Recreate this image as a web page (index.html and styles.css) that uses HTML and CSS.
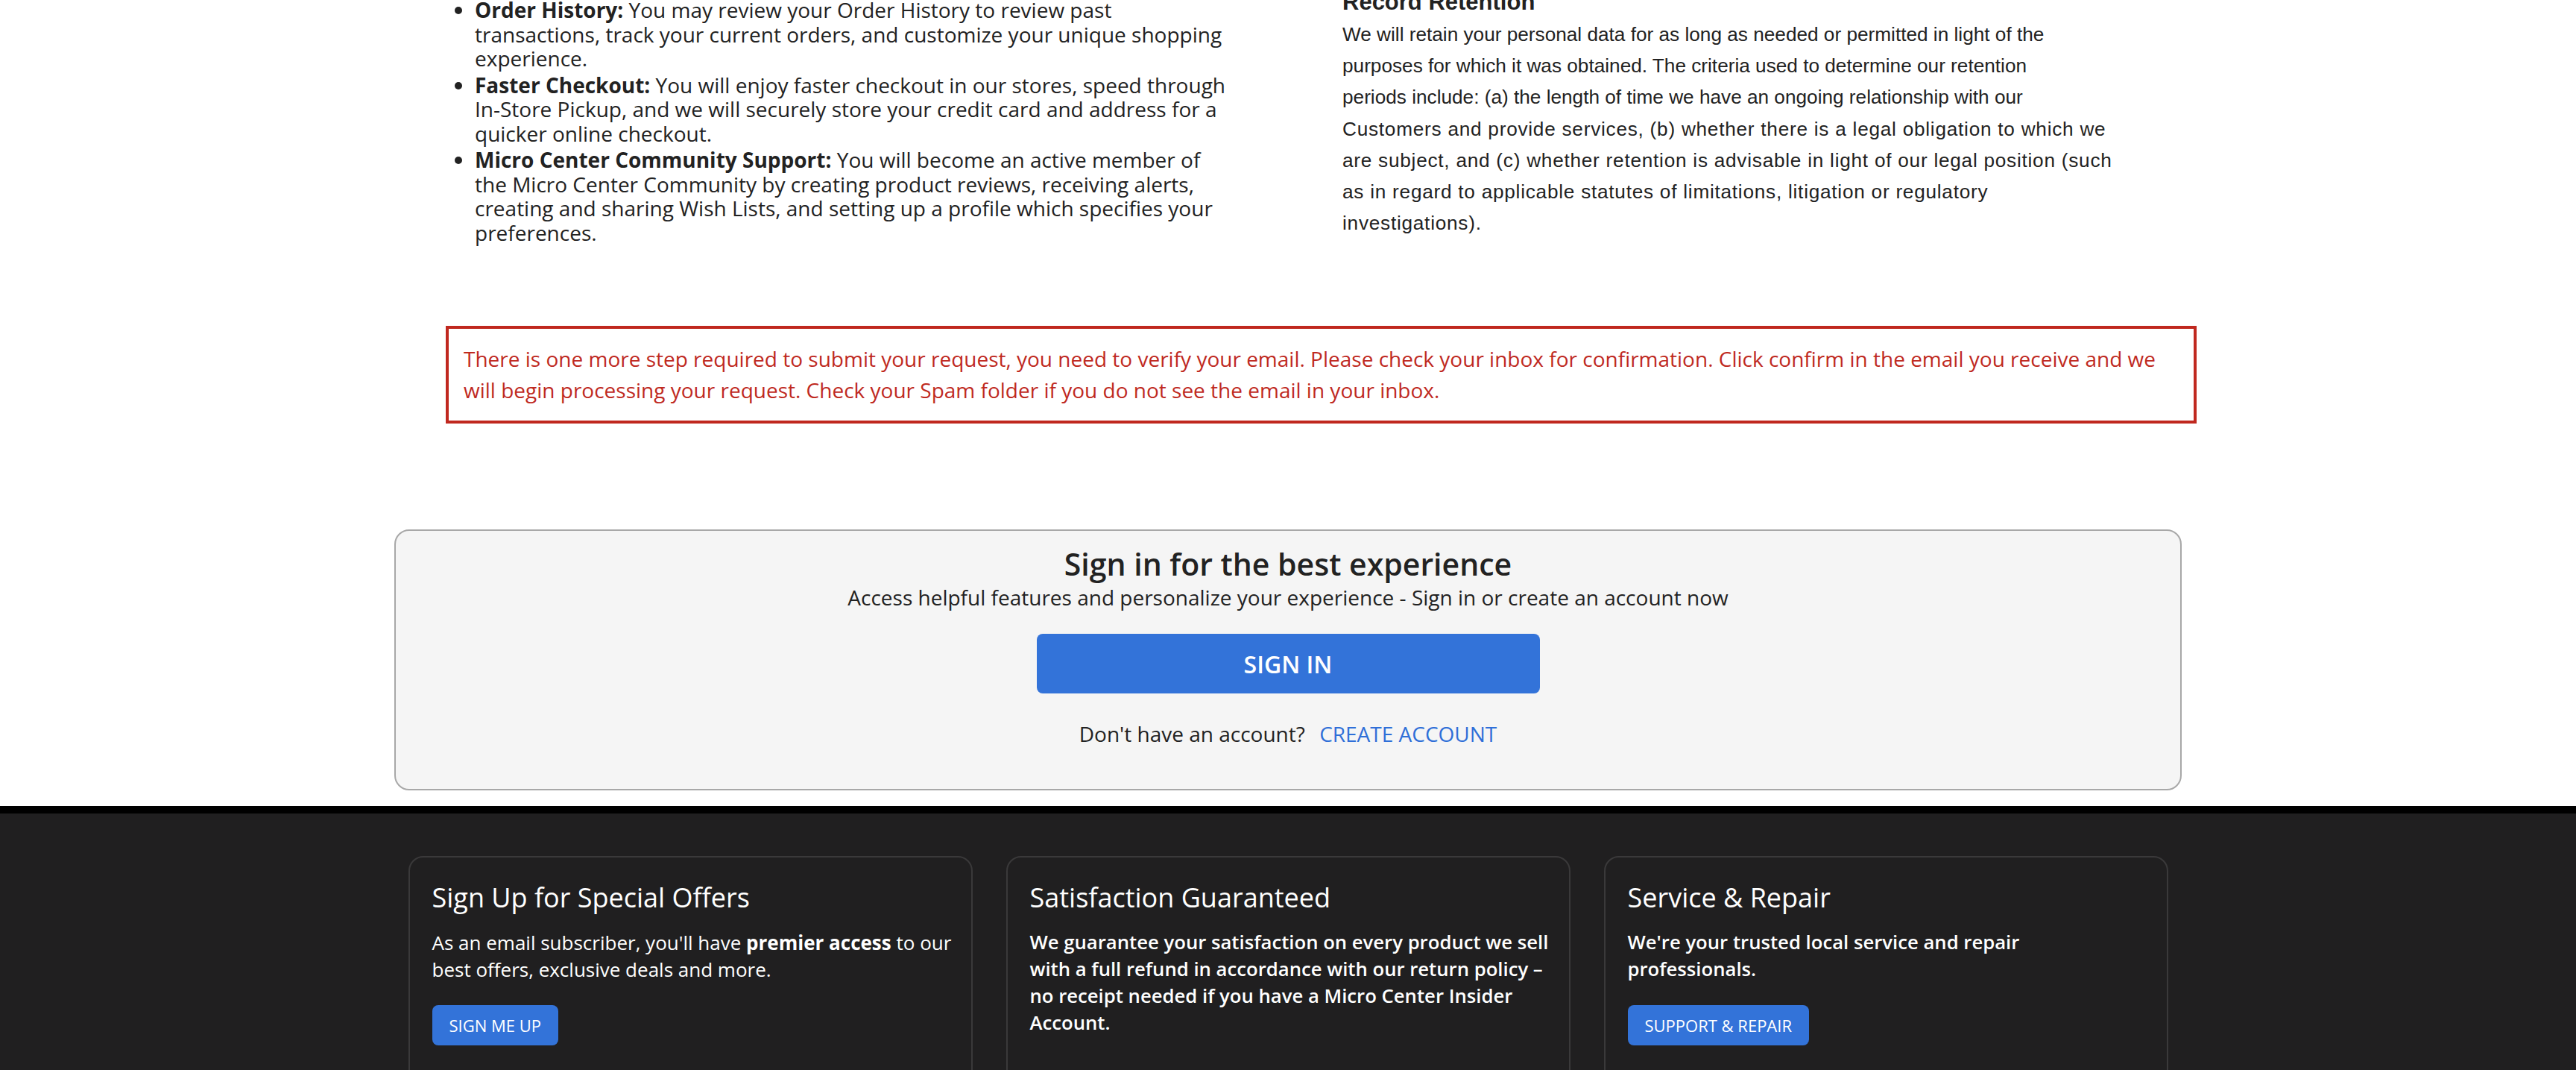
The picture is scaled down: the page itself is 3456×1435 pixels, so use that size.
FILE: index.html
```html
<!DOCTYPE html>
<html lang="en">
<head>
<meta charset="utf-8">
<title>Micro Center - Privacy Request</title>
<link rel="stylesheet" href="styles.css">
</head>
<body>
<main class="content">
  <div class="columns">
    <div class="col-left">
      <ul class="benefits">
        <li><strong>Order History:</strong> You may review your Order History to review past transactions, track your current orders, and customize your unique shopping experience.</li>
        <li><strong>Faster Checkout:</strong> You will enjoy faster checkout in our stores, speed through In-Store Pickup, and we will securely store your credit card and address for a quicker online checkout.</li>
        <li><strong>Micro Center Community Support:</strong> You will become an active member of the Micro Center Community by creating product reviews, receiving alerts, creating and sharing Wish Lists, and setting up a profile which specifies your preferences.</li>
      </ul>
    </div>
    <div class="col-right">
      <h3 class="policy-heading">Record Retention</h3>
      <p class="policy-text">We will retain your personal data for as long as needed or permitted in light of the<br>purposes for which it was obtained. The criteria used to determine our retention<br>periods include: (a) the length of time we have an ongoing relationship with our<br><span class="policy-tail">Customers and provide services, (b) whether there is a legal obligation to which we<br>are subject, and (c) whether retention is advisable in light of our legal position (such<br>as in regard to applicable statutes of limitations, litigation or regulatory<br>investigations).</span></p>
    </div>
  </div>
  <div class="notice">There is one more step required to submit your request, you need to verify your email. Please check your inbox for confirmation. Click confirm in the email you receive and we will begin processing your request. Check your Spam folder if you do not see the email in your inbox.</div>
</main>

<section class="signin-box">
  <h2 class="signin-title">Sign in for the best experience</h2>
  <p class="signin-sub">Access helpful features and personalize your experience - Sign in or create an account now</p>
  <a class="signin-btn" href="#">SIGN IN</a>
  <p class="signin-create">Don't have an account? <a class="create-link" href="#">CREATE ACCOUNT</a></p>
</section>

<footer class="footer">
  <div class="footer-cards">
    <div class="card">
      <h3 class="card-title">Sign Up for Special Offers</h3>
      <p class="card-text">As an email subscriber, you'll have <strong>premier access</strong> to our best offers, exclusive deals and more.</p>
      <a class="card-btn" href="#">SIGN ME UP</a>
    </div>
    <div class="card">
      <h3 class="card-title">Satisfaction Guaranteed</h3>
      <p class="card-text card-text-strong">We guarantee your satisfaction on every product we sell with a full refund in accordance with our return policy – no receipt needed if you have a Micro Center Insider Account.</p>
    </div>
    <div class="card">
      <h3 class="card-title">Service &amp; Repair</h3>
      <p class="card-text card-text-strong">We're your trusted local service and repair professionals.</p>
      <a class="card-btn" href="#">SUPPORT &amp; REPAIR</a>
    </div>
  </div>
</footer>
</body>
</html>
```

FILE: styles.css
```css
html, body {
  margin: 0;
  padding: 0;
  background: #ffffff;
}

body {
  font-family: "Open Sans", "Liberation Sans", sans-serif;
  color: #222222;
  overflow: hidden;
}

.content {
  width: 2349px;
  margin: -3px 0 0 calc(50% - 1130px);
}

.columns {
  display: grid;
  grid-template-columns: 1203px 1146px;
  align-items: start;
}

.benefits {
  margin: 0;
  padding: 0 0 0 39px;
  width: 1015px;
  font-size: 28px;
  line-height: 32.5px;
  color: #222;
}

.benefits li {
  margin: 0 0 3px 0;
}

.benefits strong {
  font-weight: 700;
}

.col-right {
  margin-top: -12px;
  font-family: "Liberation Sans", Arial, sans-serif;
  color: #222;
}

.policy-heading {
  margin: 0 0 4px 0;
  font-size: 31px;
  line-height: 36px;
  font-weight: 700;
}

.policy-text {
  margin: 0;
  width: 1100px;
  font-size: 26.2px;
  line-height: 42.2px;
}

.policy-tail {
  letter-spacing: 0.75px;
}

.notice {
  margin-top: 106px;
  border: 4px solid #c0281f;
  padding: 19px 20px 20px 20px;
  color: #bf2a1f;
  font-size: 28px;
  line-height: 42px;
}

.signin-box {
  width: 2398px;
  box-sizing: border-box;
  margin: 142px auto 0 auto;
  background: #f5f5f5;
  border: 2px solid #a8a8a8;
  border-radius: 20px;
  padding: 20px 0 53px 0;
  display: flex;
  flex-direction: column;
  align-items: center;
  text-align: center;
}

.signin-title {
  margin: 0;
  font-size: 41px;
  line-height: 48px;
  font-weight: 600;
  color: #222;
}

.signin-sub {
  margin: 0;
  font-size: 28px;
  line-height: 42px;
  color: #222;
}

.signin-btn {
  margin-top: 28px;
  width: 675px;
  height: 80px;
  display: flex;
  align-items: center;
  justify-content: center;
  background: #3373d9;
  border-radius: 8px;
  color: #ffffff;
  text-decoration: none;
  font-size: 32px;
  font-weight: 600;
}

.signin-create {
  margin: 33px 0 0 0;
  font-size: 28px;
  line-height: 42px;
  color: #222;
}

.create-link {
  margin-left: 12px;
  color: #2f6fd8;
  text-decoration: none;
}

.footer {
  margin-top: 21px;
  border-top: 10px solid #000000;
  background: #201f20;
  padding: 57px 0 0 0;
  height: 400px;
}

.footer-cards {
  width: 2361px;
  margin: 0 auto;
  display: grid;
  grid-template-columns: repeat(3, 757px);
  column-gap: 45px;
}

.card {
  border: 2px solid #3a393a;
  border-radius: 20px;
  padding: 32px 24px 60px 30px;
  color: #ffffff;
}

.card-title {
  margin: 0;
  font-size: 36px;
  line-height: 43px;
  font-weight: 400;
}

.card-text {
  margin: 21px 0 0 0;
  font-size: 26px;
  line-height: 36px;
}

.card-text strong {
  font-weight: 700;
}

.card-text-strong {
  font-weight: 600;
  font-size: 25.7px;
}

.card-btn {
  display: inline-flex;
  align-items: center;
  margin-top: 30px;
  height: 54px;
  padding: 0 23px;
  background: #3373d9;
  border-radius: 8px;
  color: #ffffff;
  text-decoration: none;
  font-size: 22px;
}
```
